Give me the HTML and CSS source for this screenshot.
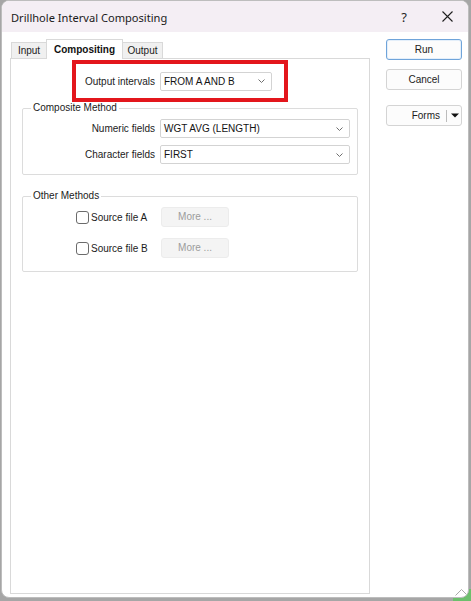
FILE: index.html
```html
<!DOCTYPE html>
<html>
<head>
<meta charset="utf-8">
<title>Drillhole Interval Compositing</title>
<link rel="stylesheet" href="styles.css">
</head>
<body>
<div class="window">
  <div class="titlebar">
    <span class="title">Drillhole Interval Compositing</span>
    <span class="caption-help">?</span>
    <span class="caption-close"><svg width="11" height="11" viewBox="0 0 11 11"><path d="M0.5 0.5L10.5 10.5M10.5 0.5L0.5 10.5" stroke="#1f1f1f" stroke-width="1.1" fill="none"/></svg></span>
  </div>
  <div class="main">
    <div class="left">
      <div class="tabs">
        <div class="tab tab-input">Input</div>
        <div class="tab tab-comp active">Compositing</div>
        <div class="tab tab-output">Output</div>
      </div>
      <div class="panel">
        <div class="highlight">
          <span class="label">Output intervals</span>
          <div class="select select-short"><span>FROM A AND B</span><svg class="chev" width="7" height="4" viewBox="0 0 7 4"><polyline points="0.5,0.5 3.5,3.5 6.5,0.5" fill="none" stroke="#6e6e6e" stroke-width="1"/></svg></div>
        </div>
        <fieldset class="group group-composite">
          <legend>Composite Method</legend>
          <div class="field-grid">
            <span class="label">Numeric fields</span>
            <div class="select"><span>WGT AVG (LENGTH)</span><svg class="chev" width="7" height="4" viewBox="0 0 7 4"><polyline points="0.5,0.5 3.5,3.5 6.5,0.5" fill="none" stroke="#6e6e6e" stroke-width="1"/></svg></div>
            <span class="label">Character fields</span>
            <div class="select"><span>FIRST</span><svg class="chev" width="7" height="4" viewBox="0 0 7 4"><polyline points="0.5,0.5 3.5,3.5 6.5,0.5" fill="none" stroke="#6e6e6e" stroke-width="1"/></svg></div>
          </div>
        </fieldset>
        <fieldset class="group group-other">
          <legend>Other Methods</legend>
          <div class="check-list">
            <div class="check-row">
              <label class="check"><span class="box"></span><span>Source file A</span></label>
              <span class="more">More ...</span>
            </div>
            <div class="check-row">
              <label class="check"><span class="box"></span><span>Source file B</span></label>
              <span class="more">More ...</span>
            </div>
          </div>
        </fieldset>
      </div>
    </div>
    <div class="right">
      <div class="btn primary">Run</div>
      <div class="btn">Cancel</div>
      <div class="btn split"><span>Forms</span><span class="sep"></span><svg width="8" height="5" viewBox="0 0 8 5"><polygon points="0,0.5 8,0.5 4,4.5" fill="#111"/></svg></div>
    </div>
  </div>
  <svg class="grip" width="13" height="8" viewBox="0 0 13 8"><polyline points="0.5,7.5 6.5,1.5 12.5,7.5" fill="none" stroke="#a9a9a9" stroke-width="1"/></svg>
</div>
</body>
</html>
```
FILE: styles.css
```css
html, body {
  margin: 0;
  padding: 0;
}
body {
  width: 471px;
  height: 601px;
  overflow: hidden;
  background:
    linear-gradient(#6cbf6c, #6cbf6c) right bottom / 18px 12px no-repeat,
    #a6a6a6;
  font-family: "Liberation Sans", Arial, sans-serif;
  font-size: 10px;
  color: #1b1b1b;
}
.window {
  position: relative;
  box-sizing: border-box;
  margin-left: 1px;
  width: 468px;
  height: 598px;
  border: 1px solid #bdbdbd;
  border-radius: 8px;
  background: #ffffff;
  overflow: hidden;
}
.titlebar {
  display: flex;
  align-items: center;
  height: 31px;
  background: #f4eef4;
  font-family: "Noto Sans", "Open Sans", sans-serif;
}
.title {
  padding-left: 9px;
  font-size: 11.1px;
  color: #1a1a1a;
  margin-top: 1px;
}
.caption-help {
  margin-left: auto;
  font-size: 13px;
  color: #1f1f1f;
  margin-right: 35px;
}
.caption-close {
  display: flex;
  margin-right: 15px;
}
.main {
  display: flex;
  padding: 7px 0 0 8px;
}
.left {
  width: 360px;
}
.tabs {
  display: flex;
  align-items: flex-end;
  height: 19px;
  padding-left: 1px;
}
.tab {
  box-sizing: border-box;
  height: 16px;
  line-height: 15px;
  text-align: center;
  border: 1px solid #d9d9d9;
  border-bottom: none;
  background: #f0f0f0;
  color: #1b1b1b;
}
.tab-input { width: 36px; }
.tab-comp { width: 77px; margin-left: -1px; }
.tab-output { width: 41px; margin-left: -1px; }
.tab.active {
  position: relative;
  z-index: 1;
  height: 20px;
  line-height: 19px;
  margin-bottom: -1px;
  background: #ffffff;
  font-weight: bold;
  color: #111;
}
.panel {
  box-sizing: border-box;
  height: 536px;
  border: 1px solid #d9d9d9;
  background: #ffffff;
}
.highlight {
  box-sizing: border-box;
  display: flex;
  align-items: center;
  justify-content: flex-end;
  gap: 5px;
  width: 216px;
  height: 42px;
  margin: 1px 0 0 61px;
  padding-right: 12px;
  border: 4px solid #e3161c;
}
.label {
  white-space: nowrap;
  text-align: right;
}
.select {
  box-sizing: border-box;
  display: flex;
  align-items: center;
  justify-content: space-between;
  height: 19px;
  padding: 0 6px 0 3px;
  border: 1px solid #d3d3d3;
  border-radius: 2px;
  background: #ffffff;
  color: #141414;
}
.select-short {
  width: 112px;
}
.chev {
  flex: none;
}
.group {
  box-sizing: border-box;
  width: 336px;
  margin: 0 0 0 11px;
  border: 1px solid #dcdcdc;
  border-radius: 2px;
  padding: 0;
  min-width: 0;
}
.group legend {
  margin-left: 8px;
  padding: 0 2px;
  line-height: 12px;
  font-size: 10px;
  color: #1b1b1b;
}
.group-composite {
  padding: 5px 7px 10px 0;
}
.field-grid {
  display: grid;
  grid-template-columns: 132px 190px;
  column-gap: 5px;
  row-gap: 7px;
  align-items: center;
}
.group-other {
  margin-top: 15px;
  padding: 5px 0 13px 0;
}
.check-list {
  display: flex;
  flex-direction: column;
  gap: 11px;
  padding-left: 53px;
}
.check-row {
  display: flex;
  align-items: center;
  height: 20px;
}
.check {
  display: flex;
  align-items: center;
  width: 85px;
}
.box {
  box-sizing: border-box;
  width: 13px;
  height: 13px;
  margin-right: 2px;
  border: 1px solid #6b6b6b;
  border-radius: 3px;
  background: #ffffff;
}
.more {
  box-sizing: border-box;
  width: 68px;
  height: 20px;
  line-height: 18px;
  text-align: center;
  border: 1px solid #ececec;
  border-radius: 3px;
  background: #f4f4f4;
  color: #9c9c9c;
}
.right {
  display: flex;
  flex-direction: column;
  margin-left: 16px;
  width: 76px;
}
.btn {
  box-sizing: border-box;
  height: 21px;
  line-height: 19px;
  text-align: center;
  border: 1px solid #d4d4d4;
  border-radius: 3px;
  background: #fcfcfc;
  color: #1b1b1b;
}
.btn + .btn {
  margin-top: 9px;
}
.btn.primary {
  border-color: #6fa4da;
  box-shadow: inset 0 0 0 1px #e4effa;
}
.btn.split {
  margin-top: 15px;
  display: flex;
  align-items: center;
  justify-content: flex-end;
  padding-right: 2px;
}
.sep {
  width: 1px;
  height: 12px;
  margin: 0 4px 0 6px;
  background: #bcbcbc;
}
.grip {
  position: absolute;
  right: 0;
  bottom: 1px;
}
```
